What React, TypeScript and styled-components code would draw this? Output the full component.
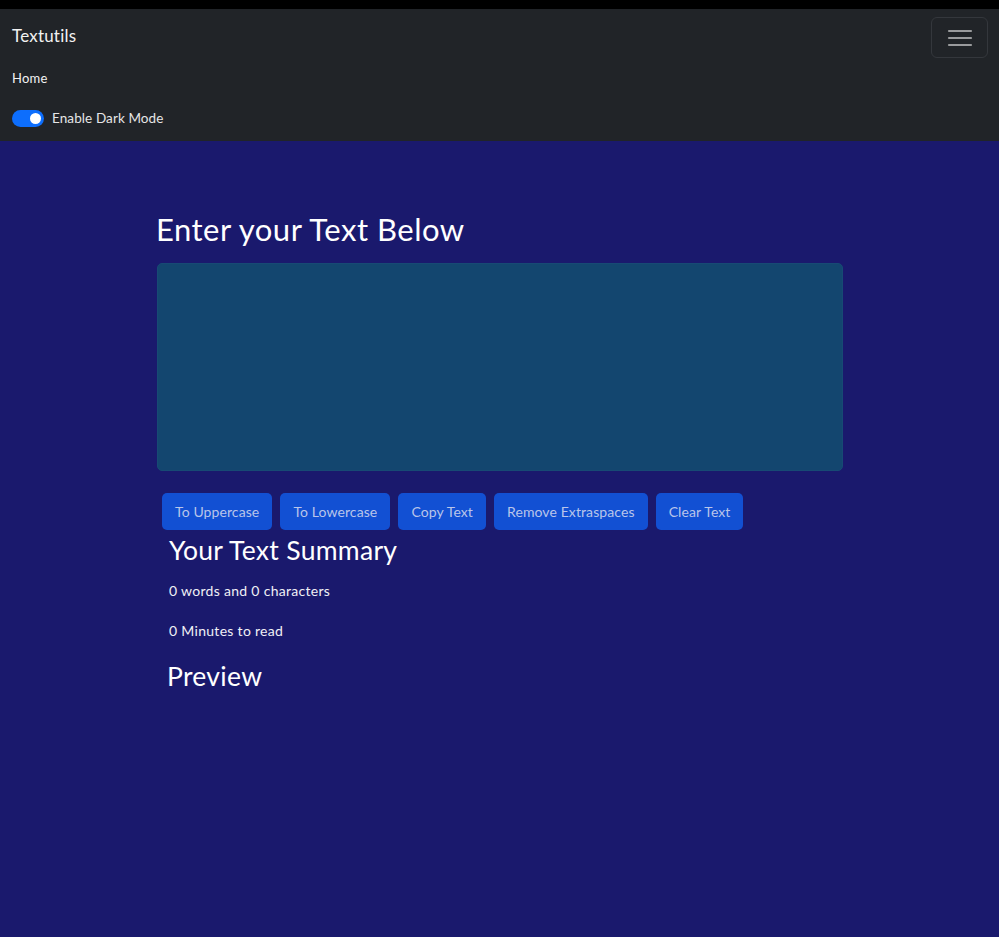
import React from "react";
import styled, { createGlobalStyle } from "styled-components";

const Global = createGlobalStyle`
  html, body { margin: 0; padding: 0; }
  body { background: #1a196d; font-family: Lato, "Noto Sans", sans-serif; }
`;

const Page = styled.div`
  min-height: 937px;
  background: #1a196d;
  display: flex;
  flex-direction: column;
`;

const TopStrip = styled.div`
  height: 9px;
  background: #000;
`;

const Nav = styled.nav`
  background: #212428;
  height: 132px;
  padding: 0 11px 0 12px;
  display: grid;
  grid-template-columns: 1fr auto;
  grid-template-rows: 53px 28px 51px;
`;

const Brand = styled.div`
  color: #f2f2f2;
  font-size: 17px;
  letter-spacing: 0.2px;
  display: flex;
  align-items: center;
`;

const Toggler = styled.button`
  grid-column: 2;
  grid-row: 1;
  align-self: end;
  width: 57px;
  height: 41px;
  margin-bottom: 4px;
  background: transparent;
  border: 1px solid #34373c;
  border-radius: 6px;
  display: flex;
  align-items: center;
  justify-content: center;
  padding: 0;
`;

const NavLink = styled.div`
  grid-column: 1 / 3;
  color: #f2f2f2;
  font-size: 13px;
  letter-spacing: 0.2px;
  display: flex;
  align-items: center;
  padding-top: 4px;
`;

const SwitchRow = styled.label`
  grid-column: 1 / 3;
  display: flex;
  align-items: center;
  gap: 8px;
  color: #e6e6e6;
  font-size: 13.5px;
  letter-spacing: 0.1px;
  padding-top: 5px;
`;

const Switch = styled.span`
  width: 32px;
  height: 17px;
  border-radius: 9px;
  background: #0d6efd;
  display: flex;
  align-items: center;
  justify-content: flex-end;
  padding: 0 3px;
  box-sizing: border-box;
  &::after {
    content: "";
    width: 11px;
    height: 11px;
    border-radius: 50%;
    background: #fff;
  }
`;

const Main = styled.main`
  width: 687px;
  margin: 70px 0 0 156px;
  display: flex;
  flex-direction: column;
`;

const Title = styled.h1`
  margin: 0 0 16px;
  color: #fff;
  font-weight: 400;
  font-size: 31px;
  letter-spacing: 0.5px;
  line-height: 36px;
`;

const TextArea = styled.textarea`
  margin-left: 1px;
  height: 208px;
  background: #13466f;
  border: 1px solid #174a74;
  border-radius: 5px;
  resize: none;
  box-sizing: border-box;
  outline: none;
  color: #fff;
`;

const ButtonRow = styled.div`
  display: flex;
  gap: 8px;
  margin: 22px 0 0 6px;
`;

const Btn = styled.button`
  height: 37px;
  padding: 0 13px;
  background: #1250d3;
  border: none;
  border-radius: 5px;
  color: #b9c5ea;
  font-family: Lato, sans-serif;
  font-size: 14px;
  letter-spacing: 0.1px;
`;

const Summary = styled.section`
  padding-left: 13px;
  display: flex;
  flex-direction: column;
`;

const SubTitle = styled.h2`
  margin: 4px 0 0;
  color: #fff;
  font-weight: 400;
  font-size: 26.5px;
  letter-spacing: 0.3px;
  line-height: 32px;
`;

const Para = styled.p`
  margin: 15px 0 5px;
  color: #f0f0f5;
  font-size: 14px;
  letter-spacing: 0.3px;
  line-height: 20px;
`;

const PreviewTitle = styled(SubTitle)`
  margin: 14px 0 0 -2px;
`;

export default function App() {
  return (
    <Page>
      <Global />
      <TopStrip />
      <Nav>
        <Brand>Textutils</Brand>
        <Toggler aria-label="menu">
          <svg width="26" height="22" viewBox="0 0 26 22">
            <g stroke="#9a9b9d" strokeWidth="2.2" strokeLinecap="round">
              <line x1="2" y1="4" x2="24" y2="4" />
              <line x1="2" y1="11" x2="24" y2="11" />
              <line x1="2" y1="18" x2="24" y2="18" />
            </g>
          </svg>
        </Toggler>
        <NavLink>Home</NavLink>
        <SwitchRow>
          <Switch />
          Enable Dark Mode
        </SwitchRow>
      </Nav>
      <Main>
        <Title>Enter your Text Below</Title>
        <TextArea />
        <ButtonRow>
          <Btn>To Uppercase</Btn>
          <Btn>To Lowercase</Btn>
          <Btn>Copy Text</Btn>
          <Btn>Remove Extraspaces</Btn>
          <Btn>Clear Text</Btn>
        </ButtonRow>
        <Summary>
          <SubTitle>Your Text Summary</SubTitle>
          <Para>0 words and 0 characters</Para>
          <Para>0 Minutes to read</Para>
          <PreviewTitle>Preview</PreviewTitle>
        </Summary>
      </Main>
    </Page>
  );
}
